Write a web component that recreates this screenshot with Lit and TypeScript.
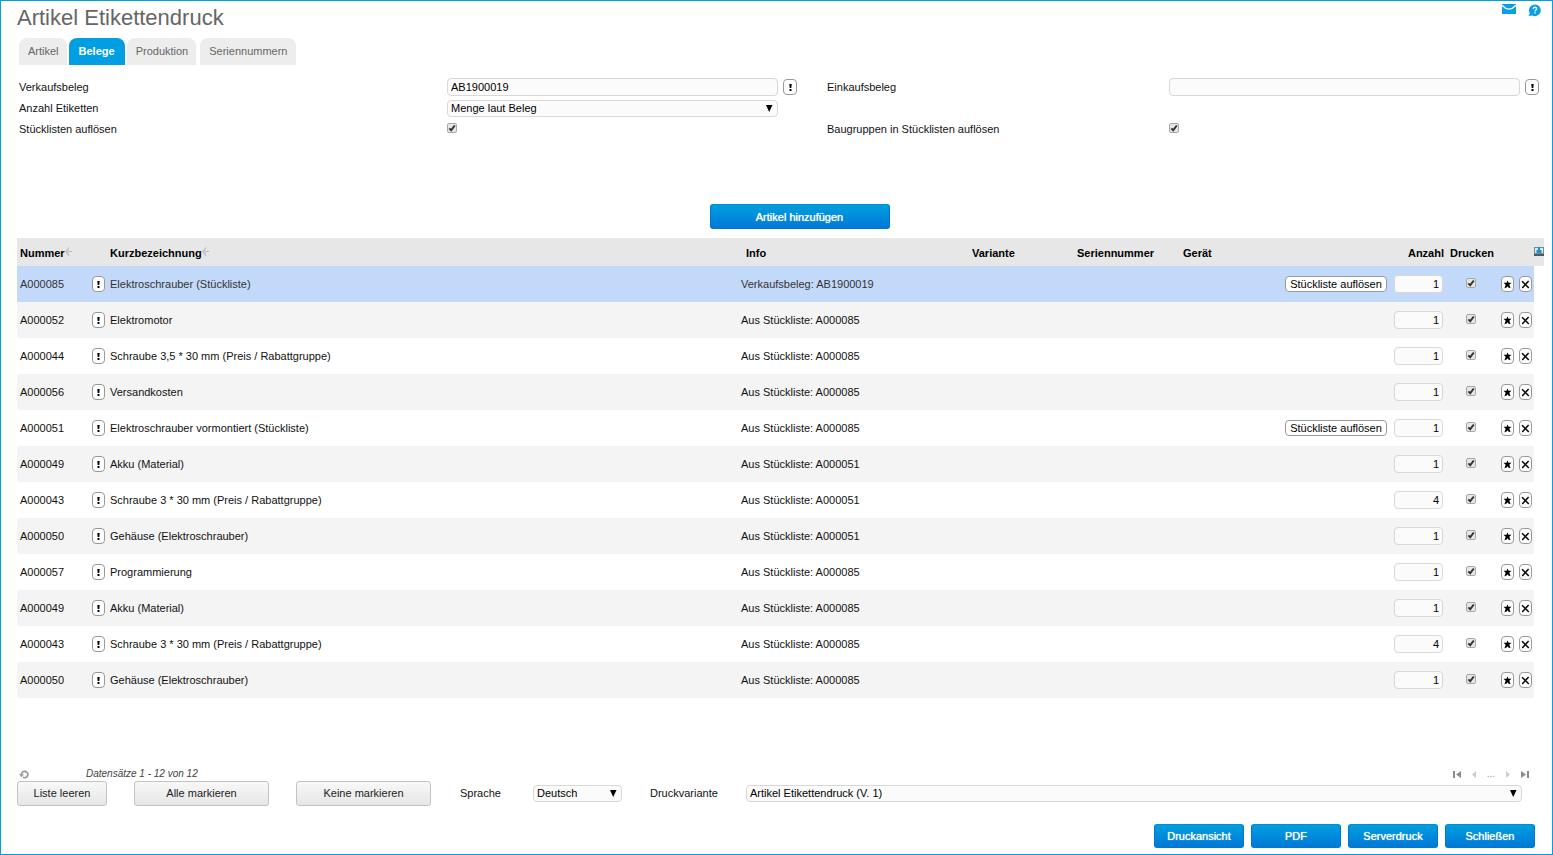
import { LitElement, html, css, svg } from "lit";
import { customElement, state } from "lit/decorators.js";

interface Row {
  nr: string;
  name: string;
  info: string;
  count: number;
  bom?: boolean;
}

const ROWS: Row[] = [
  { nr: "A000085", name: "Elektroschrauber (Stückliste)", info: "Verkaufsbeleg: AB1900019", count: 1, bom: true },
  { nr: "A000052", name: "Elektromotor", info: "Aus Stückliste: A000085", count: 1 },
  { nr: "A000044", name: "Schraube 3,5 * 30 mm (Preis / Rabattgruppe)", info: "Aus Stückliste: A000085", count: 1 },
  { nr: "A000056", name: "Versandkosten", info: "Aus Stückliste: A000085", count: 1 },
  { nr: "A000051", name: "Elektroschrauber vormontiert (Stückliste)", info: "Aus Stückliste: A000085", count: 1, bom: true },
  { nr: "A000049", name: "Akku (Material)", info: "Aus Stückliste: A000051", count: 1 },
  { nr: "A000043", name: "Schraube 3 * 30 mm (Preis / Rabattgruppe)", info: "Aus Stückliste: A000051", count: 4 },
  { nr: "A000050", name: "Gehäuse (Elektroschrauber)", info: "Aus Stückliste: A000051", count: 1 },
  { nr: "A000057", name: "Programmierung", info: "Aus Stückliste: A000085", count: 1 },
  { nr: "A000049", name: "Akku (Material)", info: "Aus Stückliste: A000085", count: 1 },
  { nr: "A000043", name: "Schraube 3 * 30 mm (Preis / Rabattgruppe)", info: "Aus Stückliste: A000085", count: 4 },
  { nr: "A000050", name: "Gehäuse (Elektroschrauber)", info: "Aus Stückliste: A000085", count: 1 },
];

const TABS = ["Artikel", "Belege", "Produktion", "Seriennummern"];

const icon = (w: number, h: number, body: unknown) =>
  html`<svg width=${w} height=${h} viewBox="0 0 ${w} ${h}" aria-hidden="true">${body}</svg>`;

const bang = icon(3, 8, svg`<path d="M0.3 1h2.4L2.3 5H0.7z M0.5 6h2v2h-2z"/>`);
const star = icon(9, 10, svg`<path d="M4.500 1.500l1 2.300 3-.1-2.200 2 1.300 3.600-2.200-.9-.9-1.100-.9 1.100-2.200.9 1.300-3.600-2.200-2 3 .1z"/>`);
const cross = icon(9, 10, svg`<path d="M1 2.200l6.800 6.800M7.600 2L1.200 9" fill="none" stroke="#111" stroke-width="1.600"/>`);
const sort = icon(7, 12, svg`<path d="M4 0.500L1 4.500l3 4.500M1.500 4.500H7" fill="none" stroke="#b9b9b9" stroke-width="1.200"/><path d="M2.500 3h1.500v4H2.500z" fill="#cfcfcf"/>`);
const columns = icon(10, 9, svg`<path d="M0 0h10v7H0z" fill="#7c8a94"/><path d="M1 1h8v5H1z" fill="#cdeaf8"/><path d="M4 0h2v3h1.500v3h-5V3H4z" fill="#1592d6"/><path d="M0 7h10v2H0z" fill="#555"/>`);
const mail = icon(14, 10, svg`<path d="M0 0h14v10H0z" fill="#0a9fe4"/><path d="M0 1.200Q7 9 14 1.200" fill="none" stroke="#fff" stroke-width="1.400"/>`);
const help = icon(13, 13, svg`<path d="M7 0.500a5.800 5.800 0 1 1-2.800 10.900L0.500 12l1.300-2.800A5.800 5.800 0 0 1 7 0.500z" fill="#0a9fe4"/><path d="M5.200 4.900c0-2.200 3.500-2.100 3.500-.2 0 1.300-1.700 1.200-1.700 2.700" fill="none" stroke="#fff" stroke-width="1.300"/><path d="M6.300 8.300h1.400v1.300H6.300z" fill="#fff"/>`);
const reload = icon(10, 9, svg`<path d="M2.400 4.500A3.200 3.200 0 1 1 4 7.300" fill="none" stroke="#999" stroke-width="1.700"/><path d="M0 4.200h5L2.500 7.200z" fill="#999"/>`);
const first = icon(8, 7, svg`<path d="M0 0h2v7H0zM8 0v7L3 3.500z" fill="#8c8c8c"/>`);
const prev = icon(4, 7, svg`<path d="M4 0v7L0 3.500z" fill="#ccc"/>`);
const next = icon(4, 7, svg`<path d="M0 0v7l4-3.500z" fill="#ccc"/>`);
const last = icon(8, 7, svg`<path d="M6 0h2v7H6zM0 0v7l5-3.500z" fill="#8c8c8c"/>`);

@customElement("app-root")
export class AppRoot extends LitElement {
  @state() private tab = "Belege";

  static styles = css`
    :host {
      display: flex;
      flex-direction: column;
      box-sizing: border-box;
      min-height: 100vh;
      border: 1px solid #009fe3;
      background: #fff;
      color: #111;
      font: 11px/16px "Liberation Sans", Arial, sans-serif;
    }
    *, *::before { box-sizing: border-box; }
    svg { display: block; flex: none; }
    button, input, select { font: inherit; color: inherit; margin: 0; }
    button { padding: 0; cursor: pointer; }

    .head {
      display: flex;
      justify-content: space-between;
      align-items: flex-start;
      padding: 3px 11px 0 16px;
    }
    .title { margin: 0; padding-top: 1px; font-size: 22px; line-height: 26px; font-weight: 400; color: #666; }
    .tools { display: flex; gap: 12px; align-items: flex-start; }
    .plain { border: 0; background: none; }

    .tabs { display: flex; gap: 2px; padding: 7px 18px 0; }
    .tab {
      height: 27px;
      padding: 0 8px 2px 9px;
      border: 0;
      border-radius: 8px 8px 0 0;
      background: #ededed;
      color: #666;
    }
    .tab:last-child { margin-left: 2px; }
    .tab.active { background: #009fe3; color: #fff; font-weight: 700; padding: 0 10px 2px; }

    .form {
      display: grid;
      grid-template-columns: 428fr 350fr 30px 342fr 370fr;
      grid-auto-rows: 21px;
      align-items: center;
      padding: 11px 13px 0 18px;
    }
    .second { grid-column: 4; }
    .field { display: flex; align-items: center; gap: 5px; }
    .box {
      flex: 1;
      min-width: 0;
      height: 18px;
      padding: 0 3px;
      border: 1px solid #d8d8d8;
      border-radius: 4px;
      background-color: #fbfbfb;
      color: #000;
    }
    .pick {
      appearance: none;
      height: 17px;
      padding: 0 16px 0 3px;
      line-height: 15px;
      background-image: url("data:image/svg+xml,%3Csvg xmlns='http://www.w3.org/2000/svg' width='8' height='7'%3E%3Cpath d='M1 0h6.500L4.200 7z'/%3E%3C/svg%3E");
      background-repeat: no-repeat;
      background-position: right 4px center;
    }
    .form .pick { margin: 1px 19px 0 0; }
    .check {
      appearance: none;
      display: block;
      width: 10px;
      height: 10px;
      margin-bottom: 2px;
      border: 1px solid #a8a8a8;
      border-radius: 2px;
      background: #e6e6e6;
    }
    .check:checked {
      background: #e6e6e6 url("data:image/svg+xml,%3Csvg xmlns='http://www.w3.org/2000/svg' width='8' height='8'%3E%3Cpath d='M1.300 4.300L3.200 6.200 6.800 1.500' fill='none' stroke='%23333' stroke-width='1.900'/%3E%3C/svg%3E") center no-repeat;
    }
    .mini {
      display: flex;
      align-items: center;
      justify-content: center;
      flex: none;
      width: 13px;
      height: 16px;
      border: 1px solid #999;
      border-radius: 4px;
      background: #fff;
    }
    .field .mini { width: 14px; }

    .add { display: flex; justify-content: center; padding: 65px 0 9px 46px; }
    .blue {
      width: 90px;
      height: 24px;
      border: 1px solid #0079c9;
      border-top-color: #0090d0;
      border-radius: 3px;
      background: linear-gradient(#009fdf, #0078d7);
      color: #fff;
      text-shadow: 0 0 1px #fff;
    }
    .blue.wide { width: 180px; height: 25px; }

    .list { padding: 0 8px 0 16px; }
    .grid { width: 100%; border-collapse: collapse; table-layout: fixed; }
    .grid th {
      height: 28px;
      padding: 2px 3px 0;
      background: #e7e7e7;
      color: #000;
      text-align: left;
      white-space: nowrap;
    }
    .grid th.info { padding-left: 8px; }
    .grid th.end, .grid td.end { padding: 0; background: none; }
    .grid th.end { background: #e7e7e7; }
    .grid th.num { text-align: right; padding-right: 2px; }
    .sorted { display: flex; align-items: center; }
    .grid td { height: 36px; padding: 0 3px; white-space: nowrap; }
    .grid td.tight { padding: 0; }
    .grid tbody tr:nth-child(even) td:not(.end) { background: #f4f4f4; }
    .grid tbody tr.selected td:not(.end) { background: #c3d9fa; color: #333; }
    .grid td.bomcell { padding-right: 4px; }
    .bom {
      display: block;
      width: 102px;
      height: 16px;
      line-height: 14px;
      margin-left: auto;
      border: 1px solid #999;
      border-radius: 4px;
      background: #fff;
      color: #000;
    }
    .amount { display: block; width: 49px; text-align: right; }
    .print { margin: 0 auto 2px; }
    .acts { display: flex; gap: 5px; justify-content: flex-end; padding-right: 2px; }
    .c-nr { width: 75px; }
    .c-i { width: 15px; }
    .c-info { width: 231px; }
    .c-var { width: 105px; }
    .c-ser { width: 106px; }
    .c-dev { width: 100px; }
    .c-bom { width: 111px; }
    .c-num { width: 55px; }
    .c-prt { width: 50px; }
    .c-act { width: 38px; }
    .c-end { width: 10px; }

    .foot { margin-top: auto; padding: 20px 17px 6px 16px; }
    .status { display: flex; align-items: center; height: 14px; padding: 0 6px 0 2px; }
    .records { flex: 1; margin-left: 57px; font-size: 10px; line-height: 12px; font-style: italic; color: #444; }
    .pager { display: flex; align-items: center; gap: 11px; color: #999; font-size: 10px; }
    .bar { display: flex; align-items: center; padding-right: 13px; }
    .grey {
      width: 135px;
      height: 25px;
      margin-right: 27px;
      padding-bottom: 2px;
      border: 1px solid #c3c3c3;
      border-radius: 3px;
      background: linear-gradient(#f8f8f8, #e6e6e6);
      color: #222;
    }
    .grey.small { width: 90px; }
    .lab { width: 73px; margin-left: 2px; padding-bottom: 2px; }
    .lang { flex: none; width: 89px; margin-right: 26px; }
    .lab.long { width: 96px; }
    .final { display: flex; justify-content: flex-end; gap: 7px; padding-top: 18px; }
  `;

  render() {
    return html`
      <header class="head">
        <h1 class="title">Artikel Etikettendruck</h1>
        <div class="tools">
          <button class="plain" aria-label="E-Mail">${mail}</button>
          <button class="plain" aria-label="Hilfe">${help}</button>
        </div>
      </header>
      <nav class="tabs">
        ${TABS.map(
          (t) => html`<button class="tab ${t === this.tab ? "active" : ""}" @click=${() => (this.tab = t)}>${t}</button>`
        )}
      </nav>
      <section class="form">
        <label for="sale">Verkaufsbeleg</label>
        <div class="field">
          <input class="box" id="sale" type="text" value="AB1900019" />
          <button class="mini" aria-label="Verkaufsbeleg öffnen">${bang}</button>
        </div>
        <label class="second" for="purchase">Einkaufsbeleg</label>
        <div class="field">
          <input class="box" id="purchase" type="text" />
          <button class="mini" aria-label="Einkaufsbeleg öffnen">${bang}</button>
        </div>
        <label for="amount">Anzahl Etiketten</label>
        <div class="field">
          <select class="box pick" id="amount"><option>Menge laut Beleg</option></select>
        </div>
        <span class="second"></span><span></span>
        <label for="bom">Stücklisten auflösen</label>
        <div class="field"><input class="check" id="bom" type="checkbox" checked /></div>
        <label class="second" for="groups">Baugruppen in Stücklisten auflösen</label>
        <div class="field"><input class="check" id="groups" type="checkbox" checked /></div>
      </section>
      <div class="add"><button class="blue wide">Artikel hinzufügen</button></div>
      <div class="list">
        <table class="grid">
          <colgroup>
            <col class="c-nr" /><col class="c-i" /><col /><col class="c-info" /><col class="c-var" />
            <col class="c-ser" /><col class="c-dev" /><col class="c-bom" /><col class="c-num" />
            <col class="c-prt" /><col class="c-act" /><col class="c-end" />
          </colgroup>
          <thead>
            <tr>
              <th><span class="sorted">Nummer${sort}</span></th>
              <th></th>
              <th><span class="sorted">Kurzbezeichnung${sort}</span></th>
              <th class="info">Info</th>
              <th>Variante</th>
              <th>Seriennummer</th>
              <th>Gerät</th>
              <th></th>
              <th class="num">Anzahl</th>
              <th class="num">Drucken</th>
              <th></th>
              <th class="end"><button class="plain" aria-label="Spalten">${columns}</button></th>
            </tr>
          </thead>
          <tbody>
            ${ROWS.map(
              (r, i) => html`<tr class=${i === 0 ? "selected" : ""}>
                <td>${r.nr}</td>
                <td class="tight"><button class="mini" aria-label="Artikel öffnen">${bang}</button></td>
                <td>${r.name}</td>
                <td>${r.info}</td>
                <td></td>
                <td></td>
                <td></td>
                <td class="bomcell">${r.bom ? html`<button class="bom">Stückliste auflösen</button>` : ""}</td>
                <td><input class="box amount" type="text" aria-label="Anzahl" .value=${String(r.count)} /></td>
                <td><input class="check print" type="checkbox" aria-label="Drucken" checked /></td>
                <td class="tight">
                  <div class="acts">
                    <button class="mini" aria-label="Favorit">${star}</button>
                    <button class="mini" aria-label="Entfernen">${cross}</button>
                  </div>
                </td>
                <td class="end"></td>
              </tr>`
            )}
          </tbody>
        </table>
      </div>
      <footer class="foot">
        <div class="status">
          <button class="plain" aria-label="Aktualisieren">${reload}</button>
          <span class="records">Datensätze 1 - 12 von 12</span>
          <div class="pager">
            <button class="plain" aria-label="Erste Seite">${first}</button>
            <button class="plain" aria-label="Vorherige Seite">${prev}</button>
            <span>...</span>
            <button class="plain" aria-label="Nächste Seite">${next}</button>
            <button class="plain" aria-label="Letzte Seite">${last}</button>
          </div>
        </div>
        <div class="bar">
          <button class="grey small">Liste leeren</button>
          <button class="grey">Alle markieren</button>
          <button class="grey">Keine markieren</button>
          <label class="lab" for="lang">Sprache</label>
          <select class="box pick lang" id="lang"><option>Deutsch</option></select>
          <label class="lab long" for="variant">Druckvariante</label>
          <select class="box pick" id="variant"><option>Artikel Etikettendruck (V. 1)</option></select>
        </div>
        <div class="final">
          <button class="blue">Druckansicht</button>
          <button class="blue">PDF</button>
          <button class="blue">Serverdruck</button>
          <button class="blue">Schließen</button>
        </div>
      </footer>
    `;
  }
}
